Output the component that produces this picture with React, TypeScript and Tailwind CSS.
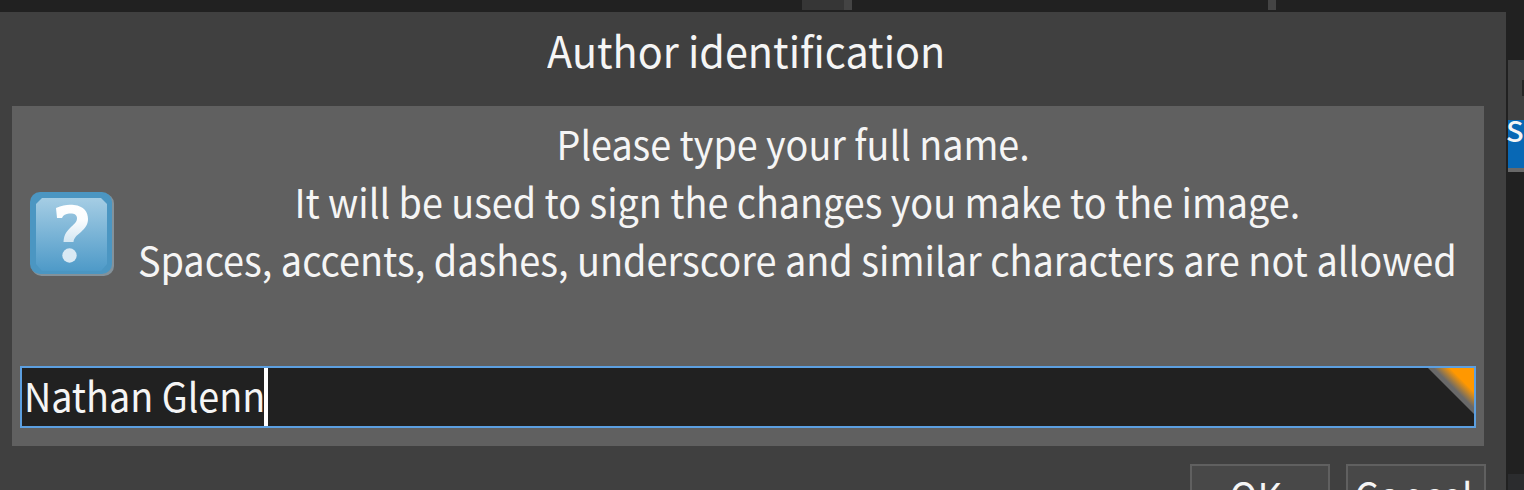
function QuestionIcon() {
  return (
    <svg viewBox="0 0 84 84" className="h-[84px] w-[84px] shrink-0">
      <defs>
        <linearGradient id="face" x1="0" y1="0" x2="0" y2="1">
          <stop offset="0" stopColor="#a5cde4" />
          <stop offset="1" stopColor="#4e9ac8" />
        </linearGradient>
        <linearGradient id="mark" x1="0" y1="0" x2="0" y2="1">
          <stop offset="0" stopColor="#ffffff" />
          <stop offset="0.4" stopColor="#fbfdfe" />
          <stop offset="1" stopColor="#d3e6f2" />
        </linearGradient>
      </defs>
      <rect x="1.5" y="1.5" width="82.5" height="82.5" rx="10" fill="#83929b" />
      <rect x="0" y="0" width="82" height="82" rx="10" fill="#4b96c2" />
      <path d="M12 6H71L77 12V72L71 79H12L6 72V12Z" fill="url(#face)" />
      <path
        d="M26 16C34 12 41 12.5 44 13C54 14 58 20 58 27C58 33 55 36 51 40C46 44 44 46 43.500 50H33.500C34 42 37 39 41 35C45 31 47 30 47 26C47 22 43 21 39 21.500C36 22 33 23 32 26H27Z"
        fill="url(#mark)"
      />
      <circle cx="39.500" cy="63.500" r="7.200" fill="#d9e9f4" />
    </svg>
  );
}

export default function App() {
  return (
    <div className="flex h-[490px] w-[1524px] flex-col overflow-hidden bg-[#212121] font-['Noto_Sans_CJK_SC','Noto_Sans',sans-serif] text-[40px] text-[#f5f5f5]">
      <div className="flex h-3 shrink-0">
        <div className="ml-[802px] h-2.5 w-[42px] bg-[#363636]" />
        <div className="h-2.5 w-2 bg-[#444444]" />
        <div className="ml-[416px] h-2.5 w-2 bg-[#444444]" />
      </div>
      <div className="flex h-[478px]">
        <main className="w-[1506px] shrink-0 bg-[#404040]">
          <h1 className="flex h-[94px] justify-center pr-[13px] text-[43px] leading-[74px] whitespace-nowrap">
            <span className="h-[74px] scale-x-[0.961]">Author identification</span>
          </h1>
          <section className="ml-3 h-[340px] w-[1472px] bg-[#606060] px-2">
            <div className="flex h-[260px] pl-2.5">
              <div className="pt-[86px]">
                <QuestionIcon />
              </div>
              <div className="flex w-[1366px] flex-col items-center pt-[8px] leading-[58px] whitespace-nowrap">
                <span className="-ml-[8px] scale-x-[0.942]">Please type your full name.</span>
                <span className="scale-x-[0.943]">It will be used to sign the changes you make to the image.</span>
                <span className="scale-x-[0.947]">Spaces, accents, dashes, underscore and similar characters are not allowed</span>
              </div>
            </div>
            <div className="flex h-[62px] border-2 border-[#5c9fe0] bg-[#212121]">
              <span className="w-[242px] origin-left scale-x-[0.943] pl-0.5 leading-[54px] whitespace-nowrap">Nathan Glenn</span>
              <span className="h-full w-1 bg-white" />
              <svg viewBox="0 0 46 46" className="ml-auto h-[46px] w-[46px]">
                <defs>
                  <linearGradient id="corner" gradientUnits="userSpaceOnUse" x1="23" y1="23" x2="34" y2="12">
                    <stop offset="0.25" stopColor="#696969" />
                    <stop offset="1" stopColor="#ff9800" />
                  </linearGradient>
                </defs>
                <path d="M0 0H46V46Z" fill="url(#corner)" />
              </svg>
            </div>
          </section>
          <div className="flex justify-end gap-4 pt-[18px] pr-5 leading-[58px] whitespace-nowrap">
            <button className="flex h-[62px] w-[140px] justify-center border-2 border-[#606060] bg-[#484848] pr-2">
              <span className="scale-x-[0.943]">OK</span>
            </button>
            <button className="flex h-[62px] w-[140px] justify-center border-2 border-[#606060] bg-[#484848] pr-1">
              <span className="scale-x-[0.943]">Cancel</span>
            </button>
          </div>
        </main>
        <aside className="w-[18px] overflow-hidden pt-12 pl-0.5">
          <div className="flex h-[60px] justify-end bg-[#404040] pt-5">
            <div className="h-4 w-0.5 bg-[#252525]" />
          </div>
          <div className="h-12 bg-[#0868b5] text-[38px] leading-[12px]">
            <span className="-ml-0.5 block h-12">s</span>
          </div>
          <div className="h-1 bg-[#696969]" />
          <div className="mt-[302px] h-4 bg-[#2b2c2e]" />
        </aside>
      </div>
    </div>
  );
}
